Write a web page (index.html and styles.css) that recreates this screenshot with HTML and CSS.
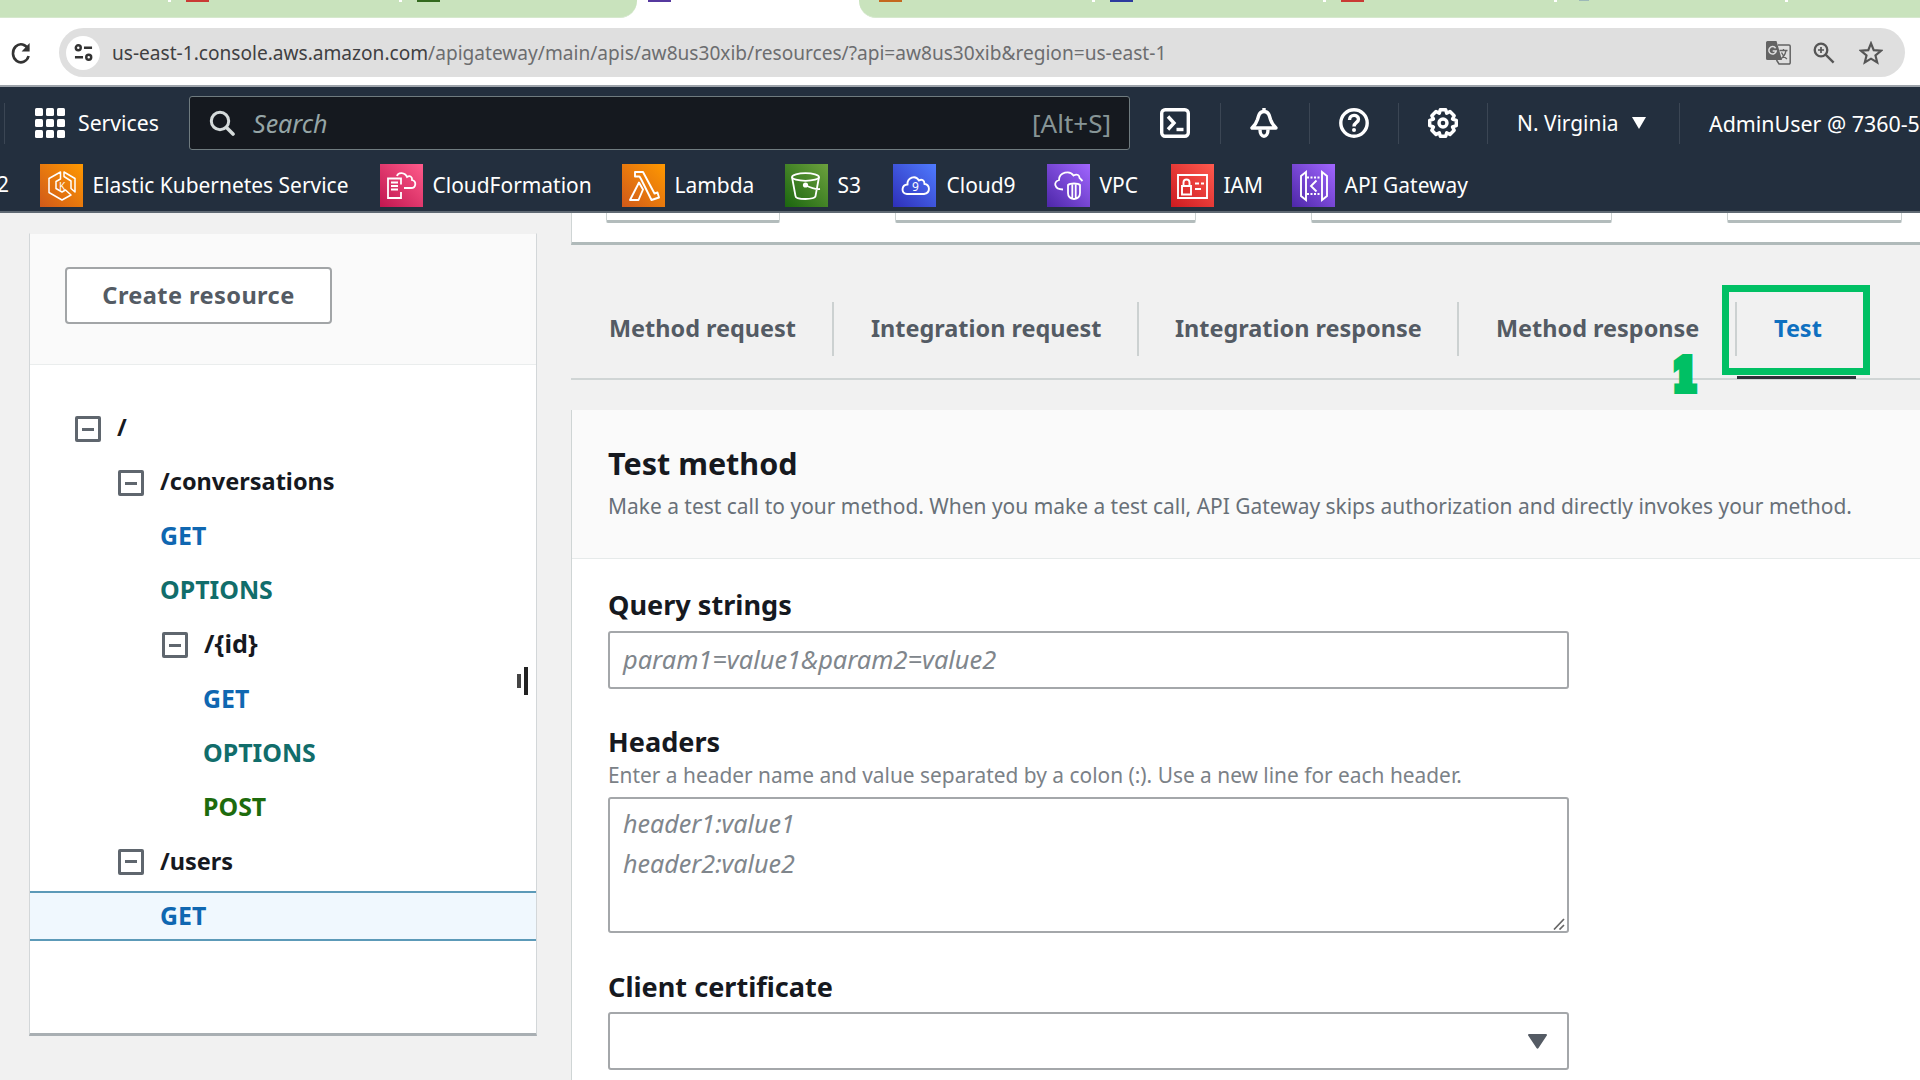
FILE: index.html
```html
<!DOCTYPE html>
<html lang="en">
<head>
<meta charset="utf-8">
<title>API Gateway - Resources</title>
<link rel="stylesheet" href="styles.css">
</head>
<body>
<div class="browser">
  <div class="tab-strip">
    <div class="tabs tabs-left">
      <div class="browser-tab first"></div>
      <div class="browser-tab"><i class="favicon red"></i></div>
      <div class="browser-tab"><i class="favicon green"></i></div>
    </div>
    <div class="tab-active"><i class="favicon purple"></i></div>
    <div class="tabs tabs-right">
      <div class="browser-tab"><i class="favicon orange"></i></div>
      <div class="browser-tab"><i class="favicon blue"></i></div>
      <div class="browser-tab"><i class="favicon red"></i></div>
      <div class="browser-tab"><i class="favicon grey"></i></div>
      <div class="browser-tab"></div>
    </div>
  </div>
  <div class="toolbar">
    <svg class="reload" viewBox="0 0 20 24"><path d="M17.2 8.5A8 9 0 1 0 17.6 15" fill="none" stroke="#333" stroke-width="2.6"/><path d="M18.6 2v8.4h-8z" fill="#333"/></svg>
    <div class="address">
      <span class="site-info"><svg viewBox="0 0 20 20"><g fill="none" stroke="#333" stroke-width="2.6"><circle cx="4.5" cy="5" r="2.6"/><path d="M10.5 5H19M1 15h8.500"/><circle cx="15.500" cy="15" r="2.600"/></g></svg></span>
      <span class="url">us-east-1.console.aws.amazon.com<span class="path">/apigateway/main/apis/aw8us30xib/resources/?api=aw8us30xib&amp;region=us-east-1</span></span>
      <svg class="addr-icon translate" viewBox="0 0 25 25"><path d="M12 5h11a1.200 1.200 0 0 1 1.200 1.200v16.600a1.200 1.200 0 0 1-1.200 1.200H13l-2.500-4" fill="none" stroke="#636363" stroke-width="1.500"/><path d="M1.500 1h9l5.500 19H1.500A1.500 1.500 0 0 1 0 18.500v-16A1.500 1.500 0 0 1 1.500 1z" fill="#636363"/><path d="M9.600 8.200A3.700 3.700 0 1 0 10.200 11H6.700" fill="none" stroke="#dfdfdf" stroke-width="1.500"/><path d="M13.500 10.500h8M17.500 9v1.500M20 10.500c-.8 4-3 7-5.500 8.500M15.500 12.500c1 2.500 3 5 5.500 6.500" fill="none" stroke="#636363" stroke-width="1.300"/></svg>
      <svg class="addr-icon zoom" viewBox="0 0 22 22"><g fill="none" stroke="#555" stroke-width="2.300"><circle cx="8" cy="8" r="6.300"/><path d="M12.600 12.600l8 8"/><path d="M8 5v6M5 8h6" stroke-width="1.700"/></g></svg>
      <svg class="addr-icon star" viewBox="0 0 22 22"><path d="M11 2.200l2.500 6.200 6.700.5-5.100 4.300 1.600 6.500L11 16.200l-5.700 3.500 1.600-6.500L1.800 8.900l6.700-.5z" fill="none" stroke="#555" stroke-width="2"/></svg>
    </div>
  </div>
</div>

<header class="console">
  <div class="console-top">
    <div class="services">
      <svg viewBox="0 0 30 30"><g fill="#fff"><rect width="8" height="8" rx="1.500"/><rect x="11" width="8" height="8" rx="1.500"/><rect x="22" width="8" height="8" rx="1.500"/><rect y="11" width="8" height="8" rx="1.500"/><rect x="11" y="11" width="8" height="8" rx="1.500"/><rect x="22" y="11" width="8" height="8" rx="1.500"/><rect y="22" width="8" height="8" rx="1.500"/><rect x="11" y="22" width="8" height="8" rx="1.500"/><rect x="22" y="22" width="8" height="8" rx="1.500"/></g></svg>
      <span>Services</span>
    </div>
    <div class="search">
      <svg viewBox="0 0 26 26"><circle cx="11" cy="11" r="8.700" fill="none" stroke="#d5dbdb" stroke-width="3"/><path d="M17.500 17.500l6.500 6.500" stroke="#d5dbdb" stroke-width="3.600" stroke-linecap="round"/></svg>
      <span class="search-text">Search</span>
      <span class="shortcut">[Alt+S]</span>
    </div>
    <div class="tool shell"><svg viewBox="0 0 30 30"><g fill="none" stroke="#fff" stroke-width="3.4"><rect x="1.700" y="1.700" width="26.600" height="26.600" rx="3.500"/><path d="M8 8.500l6 6.500-6 6.500"/><path d="M16.500 21.500h7"/></g></svg></div>
    <div class="tool ruled"><svg viewBox="0 0 30 30"><path d="M15 3.500c-4.500 0-5.500 4-6.500 8-1 3.500-3 6-5.500 8.500h24c-2.500-2.500-4.500-5-5.500-8.500-1-4-2-8-6.500-8z" fill="none" stroke="#fff" stroke-width="3.400" stroke-linejoin="round"/><path d="M15 0v4M11 21.500c0 9 8 9 8 0" fill="none" stroke="#fff" stroke-width="3.400"/></svg></div>
    <div class="tool ruled"><svg viewBox="0 0 30 30"><g fill="none" stroke="#fff" stroke-width="3.400"><circle cx="15" cy="15" r="13.200"/><path d="M10.500 12c0-6 9-6 9-.8 0 3.300-4.500 3-4.500 7.300"/></g><circle cx="15" cy="22" r="2" fill="#fff"/></svg></div>
    <div class="tool ruled"><svg viewBox="0 0 30 30"><g fill="none" stroke="#fff" stroke-width="3.400" stroke-linejoin="round"><path d="M12.300 1.700h5.400l1 3.500 3.300-1.700 4.200 4.200-1.700 3.400 3.800 1.200v5.400l-3.800 1.200 1.700 3.400-4.200 4.200-3.300-1.700-1 3.500h-5.400l-1-3.500L8 26.500l-4.200-4.200 1.700-3.400-3.800-1.200v-5.400l3.800-1.200-1.700-3.400L8 3.500l3.300 1.700z"/><circle cx="15" cy="15" r="4"/></g></svg></div>
    <div class="region">N. Virginia<svg viewBox="0 0 14 12"><path d="M0 0h14L7 12z" fill="#fff"/></svg></div>
    <div class="account">AdminUser @ 7360-5</div>
  </div>
  <nav class="favorites">
    <span class="cut">2</span>
    <span class="fav"><svg class="c-orange" viewBox="0 0 43 43"><g fill="none" stroke="#fff" stroke-width="1.500" stroke-linejoin="round"><path d="M20.500 8L9 14.500v14L22 36l9-5-5.500-5-3.500 2-6-3.500v-7l4.500-2.500z"/><path d="M24 8l11 6.500V28l-4-3.500v-7.500L24 12.500z"/></g><text x="22" y="25.500" class="glyph k">K</text></svg><b>Elastic Kubernetes Service</b></span>
    <span class="fav"><svg class="c-pink" viewBox="0 0 43 43"><g fill="none" stroke="#fff" stroke-width="1.800"><path d="M17 14.500H8V34h13v-6M21 20.500v-6h-4M11 18.500h7M11 22h4M11 25.500h7M15 22h3"/><path d="M17 12c1-4 8-4 10 1 3-2 5.500 0 5 3 5 1.500 4 8-1 8h-7"/></g></svg><b>CloudFormation</b></span>
    <span class="fav"><svg class="c-orange" viewBox="0 0 43 43"><path d="M13 8h8l11.500 21.500 3-1 1.500 5-7.500 2.500-10.500-21-1.500-2.500H13zM17 18.500l4 7L16.500 36H8z" fill="none" stroke="#fff" stroke-width="1.900" stroke-linejoin="round"/></svg><b>Lambda</b></span>
    <span class="fav"><svg class="c-green" viewBox="0 0 43 43"><g fill="none" stroke="#fff" stroke-width="1.800"><ellipse cx="20.500" cy="13" rx="13.500" ry="3.800"/><path d="M7 13l3.500 19c0 4 20 4 20 0L34 13M21 21.500c4 2 9 4 14 3.500"/></g><circle cx="20.500" cy="21" r="2.600" fill="#fff"/></svg><b>S3</b></span>
    <span class="fav"><svg class="c-blue" viewBox="0 0 43 43"><path d="M14 30h17c7-1 6-9.500.5-10 0-4-3-5-5.500-3.500-3.500-6-12-3-11.500 4C8.500 21 7.500 29 14 30z" fill="none" stroke="#fff" stroke-width="1.900"/><text x="22.500" y="27" class="glyph">9</text></svg><b class="wide">Cloud9</b></span>
    <span class="fav"><svg class="c-purple" viewBox="0 0 43 43"><g fill="none" stroke="#fff" stroke-width="1.800"><path d="M16 25.500c-9 0-10-8-4-9.500 0-8 11-10 14.500-4.500 4-2 6 0 6 2.500l3 3"/><path d="M21 21c2-2 10-2 12 0v8c0 4-2 5.500-6 6-4-.5-6-2-6-6zM25.300 19.800v14.700M28.700 19.800v14.700"/></g></svg><b>VPC</b></span>
    <span class="fav"><svg class="c-red" viewBox="0 0 43 43"><g fill="none" stroke="#fff" stroke-width="1.900"><path d="M7 11h29v23H7zM11 22h9v8.500h-9zM12.500 22v-3.500c0-4 6-4 6 0V22M24 19.500h4M30 19.500h3M24 25h6"/></g></svg><b>IAM</b></span>
    <span class="fav"><svg class="c-purple" viewBox="0 0 43 43"><g fill="none" stroke="#fff" stroke-width="1.900"><path d="M9 12l5-4v28l-5-4zM35 12l-5-4v28l5-4zM24.500 16.500L19 22l5.500 5.500"/><path d="M15 13.500h14M15 30h14" stroke-dasharray="2 1.500"/></g></svg><b>API Gateway</b></span>
  </nav>
</header>

<main class="page">
  <aside class="resources">
    <div class="resources-head"><button class="create">Create resource</button></div>
    <div class="tree">
      <div class="row l0"><i class="toggle"></i><span>/</span></div>
      <div class="row l1"><i class="toggle"></i><span>/conversations</span></div>
      <div class="row m1 get"><span>GET</span></div>
      <div class="row m1 options"><span>OPTIONS</span></div>
      <div class="row l2"><i class="toggle"></i><span class="param">/{id}</span></div>
      <div class="row m2 get"><span>GET</span></div>
      <div class="row m2 options"><span>OPTIONS</span></div>
      <div class="row m2 post"><span>POST</span></div>
      <div class="row l1"><i class="toggle"></i><span class="users">/users</span></div>
      <div class="row m1 get selected"><span>GET</span></div>
    </div>
    <div class="resize"><i></i><i></i></div>
  </aside>

  <section class="content">
    <div class="flow"><i></i><i></i><i></i><i></i></div>
    <div class="method-tabs">
      <span class="method-tab">Method request</span>
      <span class="method-tab">Integration request</span>
      <span class="method-tab">Integration response</span>
      <span class="method-tab">Method response</span>
      <span class="method-tab active">Test<b class="highlight"></b><b class="step">1</b></span>
    </div>
    <div class="card">
      <div class="card-head">
        <h2>Test method</h2>
        <p>Make a test call to your method. When you make a test call, API Gateway skips authorization and directly invokes your method.</p>
      </div>
      <div class="card-body">
        <label>Query strings</label>
        <div class="field">param1=value1&amp;param2=value2</div>
        <label class="headers-label">Headers</label>
        <p class="hint">Enter a header name and value separated by a colon (:). Use a new line for each header.</p>
        <div class="field area">header1:value1<br>header2:value2<svg class="grip" viewBox="0 0 12 12"><path d="M1 11.500L11 1M6.500 11.500L11 7" stroke="#666" stroke-width="1.700"/></svg></div>
        <label class="cert-label">Client certificate</label>
        <div class="field select"><svg viewBox="0 0 19 15"><path d="M1 0h17a1 1 0 0 1 .8 1.600L10.500 14a1.200 1.200 0 0 1-2 0L.2 1.600A1 1 0 0 1 1 0z" fill="#545b64"/></svg></div>
      </div>
    </div>
  </section>
</main>
</body>
</html>
```
FILE: styles.css
```css
* { box-sizing: border-box; }
body {
  margin: 0;
  width: 1920px;
  height: 1080px;
  overflow: hidden;
  background: #f1f1f1;
  font-family: "Noto Sans", "Open Sans", sans-serif;
  color: #16191f;
  white-space: nowrap;
}
svg { display: block; flex: none; }

/* Browser chrome */
.browser { height: 87px; background: #fff; border-bottom: 2px solid #9da3aa; }
.tab-strip { display: flex; height: 18px; }
.tabs { display: flex; background: #c9e3bd; border-bottom: 1px solid #d6e8ce; }
.tabs-left { width: 637px; border-bottom-right-radius: 17px; }
.tabs-right { flex: 1; border-bottom-left-radius: 17px; padding-left: 5px; overflow: hidden; }
.tab-active { width: 222px; padding-left: 11px; }
.browser-tab { width: 231px; flex: none; padding-left: 15px; background: linear-gradient(#fff, #fff) right top / 3px 2px no-repeat; }
.browser-tab.first { width: 171px; }
.tabs-left .browser-tab:last-child { background: none; }
.favicon { display: block; width: 23px; height: 2px; }
.favicon.red { background: #c93a34; }
.favicon.green { background: #33691e; }
.favicon.purple { background: #56399f; }
.favicon.orange { background: #c4681f; }
.favicon.blue { background: #2c3a9e; }
.favicon.grey { background: #9db9b8; width: 10px; height: 1px; margin-left: 7px; }
.toolbar { display: flex; align-items: center; height: 49px; margin-top: 10px; }
.reload { width: 20px; height: 24px; margin-left: 11px; }
.address { display: flex; align-items: center; width: 1846px; height: 49px; margin-left: 28px; padding-left: 7px; border-radius: 25px; background: #dfdfdf; }
.site-info { display: flex; align-items: center; justify-content: center; width: 34px; height: 34px; border-radius: 50%; background: #fff; }
.site-info svg { width: 19px; height: 19px; }
.url { width: 1666px; padding-left: 12px; font-size: 19.100px; color: #3f4042; }
.path { color: #6c6d6f; }
.translate { width: 25px; height: 25px; }
.zoom { width: 22px; height: 22px; margin-left: 22px; }
.star { width: 24px; height: 24px; margin-left: 24px; }

/* Console header */
.console { height: 126px; background: #232f3e; color: #fff; border-bottom: 2px solid #5f6973; }
.console-top { display: flex; align-items: center; height: 72px; padding-left: 4px; font-size: 21.200px; }
.services { display: flex; align-items: center; width: 185px; height: 41px; border-left: 1px solid #3b4654; padding-left: 30px; }
.services svg { width: 30px; height: 30px; margin-right: 13px; }
.services span { margin-bottom: 2px; }
.search { display: flex; align-items: center; width: 941px; height: 54px; padding: 0 18px 0 20px; background: #15191f; border: 1px solid #6f7b7f; border-radius: 3px; }
.search svg { width: 26px; height: 26px; margin-left: -1px; }
.search-text { margin: 0 0 1px 18px; font-size: 25px; font-style: italic; color: #95a5a6; }
.shortcut { margin: 0 0 1px auto; font-size: 26px; color: #879596; }
.tool { display: flex; align-items: center; justify-content: center; width: 89px; height: 41px; }
.tool.ruled, .region, .account { border-left: 1px solid #3b4654; }
.tool svg { width: 30px; height: 30px; }
.tool.shell { width: 90px; padding-right: 1px; }
.shell + .ruled { padding-right: 2px; }
.region { display: flex; align-items: center; width: 192px; height: 41px; padding-left: 29px; font-size: 20.900px; }
.region svg { width: 14px; height: 12px; margin-left: 13px; }
.account { display: flex; align-items: center; width: 241px; height: 41px; padding-left: 29px; overflow: hidden; font-size: 21.400px; }
.favorites { display: grid; grid-template-columns: 40px 340px 242px 163px 108px 154px 124px 121px 250px; height: 52px; padding-top: 5px; font-size: 20.950px; }
.cut { line-height: 41px; text-indent: -3px; }
.fav { display: flex; align-items: center; height: 43px; }
.fav svg { width: 43px; height: 43px; margin-right: 10px; }
.fav b { font-weight: 400; margin: 0 0 2px -.5px; }
.fav b.wide { margin-left: .5px; }
.c-orange { background: linear-gradient(45deg, #d0591a, #f90); }
.c-pink { background: linear-gradient(45deg, #c0164f, #ff5b8b); }
.c-green { background: linear-gradient(45deg, #1b660f, #6ca13e); }
.c-blue { background: linear-gradient(45deg, #2e2fb8, #4f7bff); }
.c-purple { background: linear-gradient(45deg, #4d27a8, #a166ff); }
.c-red { background: linear-gradient(45deg, #cc1a20, #ff5a4e); }
.glyph { font-size: 12px; fill: #fff; text-anchor: middle; }
.glyph.k { font-size: 10px; }

/* Resource tree */
.page { display: flex; height: 867px; }
.resources { position: relative; flex: none; width: 508px; height: 803px; margin: 20px 34px 0 29px; background: #fff; border: 1px solid #d3d7d9; border-top-color: #f1f1f1; border-bottom: 3px solid #a9afb3; }
.resources-head { height: 131px; padding: 33px 0 0 35px; background: #fafafa; border-bottom: 1px solid #eaeded; }
.create { display: block; width: 267px; height: 57px; padding: 0 0 2px; background: #fff; border: 2px solid #a2a5a7; border-radius: 4px; font: bold 23.600px "Noto Sans", sans-serif; letter-spacing: .4px; color: #545b64; }
.tree { padding-top: 37px; font-size: 23.500px; font-weight: bold; }
.row { display: flex; align-items: center; height: 54.100px; }
.row span { margin-bottom: 4px; }
.row .param { font-size: 25.200px; }
.row .users { margin-bottom: 2px; }
.toggle { width: 26px; height: 26px; margin-right: 16px; border: 3px solid #5f666e; border-radius: 2px; background: linear-gradient(#5f666e, #5f666e) center / 12px 3px no-repeat; }
.l0 { padding-left: 45px; }
.l1 { padding-left: 88px; }
.l2 { padding-left: 132px; }
.m1 { padding-left: 130px; }
.m2 { padding-left: 173px; }
.get, .options, .post { font-size: 24.900px; }
.get { color: #0f67b1; }
.options { color: #116d6b; }
.post { color: #1d6b0d; }
.selected { height: 50px; margin-top: 2px; background: #f0f8fe; border: solid #5c9ab8; border-width: 2px 0; }
.selected span { margin-bottom: 1px; }
.resize { position: absolute; left: 487px; top: 433px; display: flex; align-items: center; gap: 3px; }
.resize i { width: 4px; height: 28px; background: #222; }
.resize i:first-child { height: 14px; background: #444; }

/* Method panel */
.content { width: 1349px; flex: none; }
.flow { display: flex; height: 32px; padding-left: 34px; background: #fff; border-left: 1px solid #cfd5d5; border-bottom: 3px solid #b0baba; }
.flow i { flex: none; width: 174px; height: 10px; border: 1px solid #ccd2d2; border-top: 0; border-bottom: 3px solid #b3bcbc; border-radius: 0 0 2px 2px; }
.flow i:nth-child(2), .flow i:nth-child(3) { width: 301px; }
.flow i:nth-child(2) { margin: 0 115px; }
.flow i:nth-child(4) { width: 175px; margin-left: 115px; }
.method-tabs { display: flex; height: 135px; padding-top: 57px; border-bottom: 2px solid #d0d5d5; font-size: 23.450px; font-weight: bold; color: #545b64; }
.method-tab { flex: none; height: 54px; line-height: 52px; padding-left: 38px; width: 261px; }
.method-tab + .method-tab { border-left: 2px solid #ccd1d1; width: 305px; padding-left: 37px; }
.method-tab:nth-child(3) { width: 320px !important; padding-left: 36px !important; }
.method-tab:nth-child(4) { width: 278px !important; }
.method-tab.active { position: relative; width: 121px !important; color: #0f70c0; }
.active::after { content: ""; position: absolute; left: 0; top: 74px; width: 119px; height: 3px; background: #2c3038; }
.highlight { position: absolute; left: -15px; top: -17px; width: 148px; height: 90px; border: 7.500px solid #00c064; }
.step { position: absolute; left: -70px; top: 47px; width: 36px; font: bold 42px/54px "DejaVu Serif", serif; text-align: center; color: #00c064; -webkit-text-stroke: 8px #00c064; transform: scaleX(.84); }
.card { height: 700px; margin-top: 30px; background: #fff; border-left: 1px solid #cfd5d5; }
.card-head { height: 149px; padding: 31px 0 0 36px; background: #fafafa; border-bottom: 1px solid #e6eaea; }
h2 { margin: 0; font-size: 30.500px; line-height: 44px; }
.card-head p { margin: 7px 0 0; font-size: 20.940px; line-height: 28px; color: #687078; }
.card-body { padding: 28px 0 0 36px; }
label { display: block; font-size: 27.100px; font-weight: bold; line-height: 36px; }
.field { display: flex; align-items: center; width: 961px; height: 58px; margin-top: 8px; padding: 0 0 2px 13px; border: 2px solid #a4a7aa; border-radius: 3px; font-size: 25.400px; font-style: italic; color: #80868c; }
.headers-label { margin-top: 35px; }
.hint { margin: 0; font-size: 20.880px; line-height: 31px; color: #7b8187; }
.area { position: relative; display: block; height: 136px; margin-top: 6px; padding-top: 5px; line-height: 39.500px; font-size: 25.100px; }
.grip { position: absolute; right: 2px; bottom: 1px; width: 12px; height: 12px; }
.cert-label { margin-top: 36px; }
.select { margin-top: 7px; padding-bottom: 0; }
.select svg { width: 19px; height: 15px; margin-left: 905px; }
```
